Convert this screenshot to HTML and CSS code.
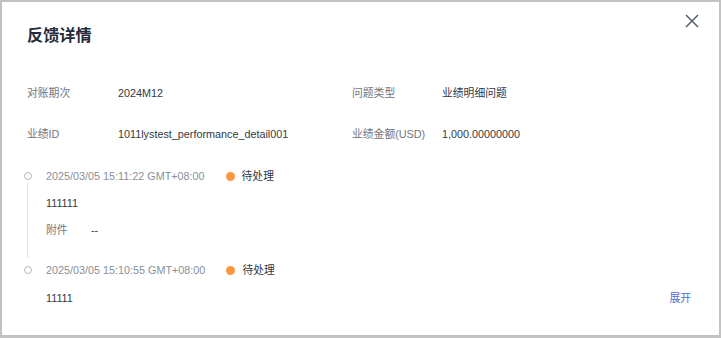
FILE: index.html
```html
<!DOCTYPE html>
<html lang="zh-CN">
<head>
    <meta charset="UTF-8">
    <title>反馈详情</title>
    <link rel="stylesheet" href="styles.css">
</head>
<body>

<div class="dialog">
    <h2 class="dialog-title">反馈详情</h2>
    <button class="close-button" aria-label="关闭">
        <svg width="16" height="16" viewBox="0 0 16 16">
            <path d="M2 2 L14 14 M14 2 L2 14" stroke="#575d6c" stroke-width="1.5" fill="none"/>
        </svg>
    </button>

    <div class="info-grid">
        <div class="info-item"><span class="info-label">对账期次</span><span class="info-value">2024M12</span></div>
        <div class="info-item"><span class="info-label">问题类型</span><span class="info-value">业绩明细问题</span></div>
        <div class="info-item"><span class="info-label">业绩ID</span><span class="info-value">1011lystest_performance_detail001</span></div>
        <div class="info-item"><span class="info-label">业绩金额(USD)</span><span class="info-value">1,000.00000000</span></div>
    </div>

    <div class="timeline">
        <div class="tl-item">
            <div class="tl-axis">
                <span class="tl-dot"></span>
                <span class="tl-line"></span>
            </div>
            <div class="tl-body">
                <div class="tl-head">
                    <span class="tl-time">2025/03/05 15:11:22 GMT+08:00</span>
                    <span class="status"><span class="status-dot"></span>待处理</span>
                </div>
                <div class="tl-text">111111</div>
                <div class="tl-attach"><span class="attach-label">附件</span><span>--</span></div>
            </div>
        </div>
        <div class="tl-item last">
            <div class="tl-axis">
                <span class="tl-dot"></span>
            </div>
            <div class="tl-body">
                <div class="tl-head">
                    <span class="tl-time">2025/03/05 15:10:55 GMT+08:00</span>
                    <span class="status"><span class="status-dot"></span>待处理</span>
                </div>
                <div class="tl-text tl-row">
                    <span>11111</span>
                    <a class="expand-link" href="#">展开</a>
                </div>
            </div>
        </div>
    </div>
</div>

</body>
</html>
```

FILE: styles.css
```css
body {
    margin: 0;
    padding: 2px 2px 3px 2px;
    background-color: #c2c2c2;
    font-family: "Liberation Sans", "Noto Sans CJK SC", sans-serif;
    font-size: 10.8px;
    line-height: 20px;
    color: #333842;
}

.dialog {
    position: relative;
    box-sizing: border-box;
    height: 333px;
    padding: 22px 28px 0 25px;
    background-color: #ffffff;
}

.dialog-title {
    margin: 0;
    font-size: 16.2px;
    line-height: 22px;
    font-weight: bold;
    color: #252b3a;
}

.close-button {
    position: absolute;
    top: 11px;
    right: 19px;
    padding: 0;
    border: none;
    background: none;
    cursor: pointer;
}

.close-button svg {
    display: block;
}

.info-grid {
    display: grid;
    grid-template-columns: 325px 1fr;
    row-gap: 21px;
    margin-top: 37px;
}

.info-item {
    display: flex;
}

.info-label {
    width: 91px;
    flex-shrink: 0;
    color: #71757f;
}

.info-item:nth-child(2n) .info-label {
    width: 90px;
}

.info-value {
    color: #333842;
}

.timeline {
    margin-top: 22px;
    margin-left: -3px;
}

.tl-item {
    display: grid;
    grid-template-columns: 22px 1fr;
}

.tl-axis {
    display: flex;
    flex-direction: column;
    align-items: flex-start;
    padding-top: 6px;
}

.tl-dot {
    box-sizing: border-box;
    width: 8px;
    height: 8px;
    border: 1px solid #b8bac1;
    border-radius: 50%;
    background: #ffffff;
}

.tl-line {
    flex: 1;
    width: 1px;
    margin: 3px 0 2px 3px;
    background-color: #dfe1e6;
}

.tl-body {
    display: flex;
    flex-direction: column;
    gap: 7px;
    padding-bottom: 20px;
}

.tl-item.last .tl-body {
    gap: 8px;
    padding-bottom: 0;
}

.tl-head {
    display: flex;
    align-items: center;
}

.tl-time {
    color: #8a8e99;
}

.status {
    display: inline-flex;
    align-items: center;
    gap: 7px;
    margin-left: 21px;
    color: #333842;
}

.status-dot {
    width: 9px;
    height: 9px;
    border-radius: 50%;
    background-color: #fa9841;
}

.tl-text {
    color: #333842;
}

.tl-row {
    display: flex;
    justify-content: space-between;
}

.tl-attach {
    display: flex;
}

.attach-label {
    width: 45px;
    color: #71757f;
}

.expand-link {
    color: #526ecc;
    text-decoration: none;
}
```
